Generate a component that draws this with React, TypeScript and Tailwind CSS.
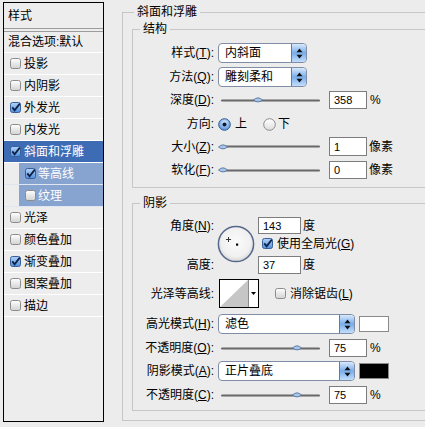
import React from "react";

const FONT = "font-['Liberation_Sans','Noto_Sans_CJK_SC',sans-serif]";

function CheckBox({ checked }: { checked?: boolean }) {
  return (
    <svg width="11" height="11" viewBox="0 0 11 11" className="shrink-0 block">
      <defs>
        <linearGradient id="cbOn" x1="0" y1="0" x2="0" y2="1">
          <stop offset="0" stopColor="#b4d4f7" />
          <stop offset="1" stopColor="#4f8fde" />
        </linearGradient>
        <linearGradient id="cbOff" x1="0" y1="0" x2="0" y2="1">
          <stop offset="0" stopColor="#ffffff" />
          <stop offset="1" stopColor="#d2d2d2" />
        </linearGradient>
      </defs>
      <rect
        x="0.5"
        y="0.5"
        width="10"
        height="10"
        rx="2"
        fill={checked ? "url(#cbOn)" : "url(#cbOff)"}
        stroke={checked ? "#37609a" : "#8c8c8c"}
      />
      {checked && (
        <path d="M2.3 5.4 L4.6 8.2 L9.8 1.6" fill="none" stroke="#0d1f45" strokeWidth="1.8" />
      )}
    </svg>
  );
}

function Radio({ checked }: { checked?: boolean }) {
  return (
    <svg width="13" height="13" viewBox="0 0 13 13" className="shrink-0 block">
      <defs>
        <radialGradient id="rOn" cx="0.5" cy="0.35" r="0.6">
          <stop offset="0" stopColor="#d9ebfd" />
          <stop offset="1" stopColor="#5b95dc" />
        </radialGradient>
        <linearGradient id="rOff" x1="0" y1="0" x2="0" y2="1">
          <stop offset="0" stopColor="#ffffff" />
          <stop offset="1" stopColor="#dedede" />
        </linearGradient>
      </defs>
      <circle
        cx="6.5"
        cy="6.5"
        r="5.8"
        fill={checked ? "url(#rOn)" : "url(#rOff)"}
        stroke={checked ? "#2f5a95" : "#8a8a8a"}
      />
      {checked && <circle cx="6.5" cy="6.5" r="2" fill="#0e1a33" />}
    </svg>
  );
}

function Stepper() {
  return (
    <div className="w-[15px] h-full rounded-r-[3px] border-l border-[#4f7fbf] bg-linear-to-b from-[#d9e9fb] via-[#79acea] to-[#c2defb] flex items-center justify-center">
      <svg width="7" height="11" viewBox="0 0 7 11">
        <path d="M3.5 0.5 L6.5 4.3 L0.5 4.3 Z M0.5 6.7 L6.5 6.7 L3.5 10.5 Z" fill="#111" />
      </svg>
    </div>
  );
}

function Select({ text, w }: { text: string; w: string }) {
  return (
    <div className={`${w} h-[20px] rounded-[4px] border border-[#7f8ea6] bg-white flex items-stretch overflow-hidden`}>
      <div className="flex-1 pl-[6px] flex items-center whitespace-nowrap">{text}</div>
      <Stepper />
    </div>
  );
}

function Slider({ pos }: { pos: number }) {
  return (
    <div className="relative w-[107px] h-full flex items-center">
      <div className="ml-[3px] w-[99px] h-[3px] rounded-full bg-linear-to-b from-[#c8c8c8] via-[#6a6a6a] to-[#c8c8c8]" />
      <svg
        className="absolute top-1/2 -translate-y-1/2"
        style={{ left: pos - 5 }}
        width="10"
        height="7"
        viewBox="0 0 10 7"
      >
        <path d="M0.5 3.5 Q5 -0.8 9.5 3.5 Q5 7.3 0.5 3.5Z" fill="#a9c5e8" stroke="#55769f" strokeWidth="0.9" />
      </svg>
    </div>
  );
}

function Num({ v, cls }: { v: string; cls: string }) {
  return (
    <div className={`${cls} shrink-0 border border-[#7d7d7d] bg-white flex items-center pl-[4px] text-[11px]`}>
      {v}
    </div>
  );
}

function Lab({ children }: { children: React.ReactNode }) {
  return <div className="w-[81px] shrink-0 text-right whitespace-nowrap">{children}</div>;
}

function AngleDial() {
  return (
    <svg width="38" height="38" viewBox="0 0 38 38" className="block">
      <defs>
        <radialGradient id="dial" cx="0.5" cy="0.45" r="0.55">
          <stop offset="0" stopColor="#fbfbfb" />
          <stop offset="0.75" stopColor="#f0f0f0" />
          <stop offset="1" stopColor="#d4d4d4" />
        </radialGradient>
      </defs>
      <circle cx="19" cy="19" r="17.6" fill="url(#dial)" stroke="#56678c" strokeWidth="1.5" />
      <path d="M9 14.5 H14 M11.5 12 V17" stroke="#333" strokeWidth="1" />
      <rect x="19" y="18.5" width="2.2" height="2.2" fill="#000" />
    </svg>
  );
}

type Item = { t: string; c?: boolean; sel?: boolean; sub?: boolean };

const items: Item[] = [
  { t: "投影" },
  { t: "内阴影" },
  { t: "外发光", c: true },
  { t: "内发光" },
  { t: "斜面和浮雕", c: true, sel: true },
  { t: "等高线", c: true, sub: true },
  { t: "纹理", sub: true },
  { t: "光泽" },
  { t: "颜色叠加" },
  { t: "渐变叠加", c: true },
  { t: "图案叠加" },
  { t: "描边" },
];

function LeftRow({ it }: { it: Item }) {
  if (it.sub) {
    return (
      <div className="h-[22px] border-b border-[#dfe6f1] flex">
        <div className="ml-[15px] flex-1 bg-[#87a3cf] text-white flex items-center pl-[6px] gap-[2px]">
          <CheckBox checked={it.c} />
          <span>{it.t}</span>
        </div>
      </div>
    );
  }
  return (
    <div
      className={`h-[22px] border-b border-white flex items-center pl-[6px] gap-[3px] ${
        it.sel ? "bg-[#3d6cb5] text-white" : ""
      }`}
    >
      <CheckBox checked={it.c} />
      <span>{it.t}</span>
    </div>
  );
}

export default function App() {
  return (
    <div className={`${FONT} w-[425px] h-[427px] overflow-hidden bg-[#ececec] flex items-start text-[12px] leading-[14px] text-black`}>
      {/* left list */}
      <div className="ml-[3px] mt-[2px] w-[101px] h-[420px] shrink-0 border border-black bg-[#ededed] flex flex-col">
        <div className="h-[25px] flex items-center pl-[4px]">样式</div>
        <div className="h-[4px] border-y border-[#9c9c9c]" />
        <div className="h-[21px] border-b border-white flex items-center pl-[4px] whitespace-nowrap">
          混合选项:默认
        </div>
        {items.map((it) => (
          <LeftRow key={it.t} it={it} />
        ))}
      </div>

      {/* right panel */}
      <fieldset className="ml-[18px] mt-[5px] w-[310px] h-[416px] shrink-0 border border-[#c6c6c6]">
        <legend className="ml-[11px] px-[3px] h-[14px] leading-[14px]">斜面和浮雕</legend>
        <div className="pl-[9px] flex flex-col">
          {/* 结构 */}
          <fieldset className="mt-[3px] w-[300px] h-[166px] border border-[#c6c6c6]">
            <legend className="ml-[7px] px-[3px] h-[14px] leading-[14px]">结构</legend>
            <div className="flex flex-col">
              <div className="flex items-center mt-[7px] h-[20px]">
                <Lab>
                  样式(<u>T</u>):
                </Lab>
                <div className="ml-[4px]">
                  <Select text="内斜面" w="w-[89px]" />
                </div>
              </div>
              <div className="flex items-center mt-[4px] h-[20px]">
                <Lab>
                  方法(<u>Q</u>):
                </Lab>
                <div className="ml-[4px]">
                  <Select text="雕刻柔和" w="w-[89px]" />
                </div>
              </div>
              <div className="flex items-center mt-[4px] h-[18px]">
                <Lab>
                  深度(<u>D</u>):
                </Lab>
                <div className="ml-[4px] h-full">
                  <Slider pos={40} />
                </div>
                <Num v="358" cls="ml-[4px] w-[38px] h-[18px]" />
                <span className="ml-[3px]">%</span>
              </div>
              <div className="flex items-center mt-[6px] h-[18px]">
                <Lab>方向:</Lab>
                <div className="ml-[4px] flex items-center">
                  <Radio checked />
                  <span className="ml-[4px]">上</span>
                  <div className="ml-[16px]">
                    <Radio />
                  </div>
                  <span className="ml-[2px]">下</span>
                </div>
              </div>
              <div className="flex items-center mt-[4px] h-[19px]">
                <Lab>
                  大小(<u>Z</u>):
                </Lab>
                <div className="ml-[4px] h-full">
                  <Slider pos={5} />
                </div>
                <Num v="1" cls="ml-[4px] w-[38px] h-[19px]" />
                <span className="ml-[2px]">像素</span>
              </div>
              <div className="flex items-center mt-[5px] h-[18px]">
                <Lab>
                  软化(<u>F</u>):
                </Lab>
                <div className="ml-[4px] h-full">
                  <Slider pos={5} />
                </div>
                <Num v="0" cls="ml-[4px] w-[38px] h-[18px]" />
                <span className="ml-[2px]">像素</span>
              </div>
            </div>
          </fieldset>

          {/* 阴影 */}
          <fieldset className="mt-[8px] w-[300px] h-[215px] border border-[#c6c6c6]">
            <legend className="ml-[7px] px-[3px] h-[14px] leading-[14px]">阴影</legend>
            <div className="flex flex-col">
              <div className="flex mt-[7px] h-[57px]">
                <div className="w-[81px] shrink-0 flex flex-col justify-between">
                  <div className="h-[18px] flex items-center justify-end whitespace-nowrap">
                    角度(<u>N</u>):
                  </div>
                  <div className="h-[18px] flex items-center justify-end whitespace-nowrap">高度:</div>
                </div>
                <div className="ml-[3px] mt-[8px]">
                  <AngleDial />
                </div>
                <div className="ml-[3px] flex flex-col">
                  <div className="flex items-center h-[17px]">
                    <Num v="143" cls="w-[43px] h-[17px]" />
                    <span className="ml-[2px]">度</span>
                  </div>
                  <div className="flex items-center mt-[4px] h-[11px] ml-[4px]">
                    <CheckBox checked />
                    <span className="ml-[4px] whitespace-nowrap">
                      使用全局光(<u>G</u>)
                    </span>
                  </div>
                  <div className="flex items-center mt-[7px] h-[18px]">
                    <Num v="37" cls="w-[43px] h-[18px]" />
                    <span className="ml-[2px]">度</span>
                  </div>
                </div>
              </div>

              <div className="flex items-center mt-[5px] h-[29px]">
                <Lab>光泽等高线:</Lab>
                <div className="ml-[5px] w-[40px] h-[29px] border border-black bg-white flex">
                  <svg width="28" height="27" viewBox="0 0 28 27" className="block">
                    <polygon points="0,27 28,0 28,27" fill="#c6c6c6" />
                  </svg>
                  <div className="w-px bg-[#8a8a8a]" />
                  <div className="flex-1 flex items-center justify-center">
                    <svg width="5" height="3" viewBox="0 0 5 3">
                      <path d="M0 0 H5 L2.5 3 Z" fill="#000" />
                    </svg>
                  </div>
                </div>
                <div className="ml-[16px]">
                  <CheckBox />
                </div>
                <span className="ml-[4px] whitespace-nowrap">
                  消除锯齿(<u>L</u>)
                </span>
              </div>

              <div className="flex items-center mt-[6px] h-[20px]">
                <Lab>
                  高光模式(<u>H</u>):
                </Lab>
                <div className="ml-[4px]">
                  <Select text="滤色" w="w-[137px]" />
                </div>
                <div className="ml-[4px] w-[30px] h-[16px] border border-[#8a8a8a] bg-white" />
              </div>

              <div className="flex items-center mt-[5px] h-[18px]">
                <Lab>
                  不透明度(<u>O</u>):
                </Lab>
                <div className="ml-[4px] h-full">
                  <Slider pos={79} />
                </div>
                <Num v="75" cls="ml-[4px] w-[38px] h-[18px]" />
                <span className="ml-[3px]">%</span>
              </div>

              <div className="flex items-center mt-[4px] h-[20px]">
                <Lab>
                  阴影模式(<u>A</u>):
                </Lab>
                <div className="ml-[4px]">
                  <Select text="正片叠底" w="w-[137px]" />
                </div>
                <div className="ml-[4px] w-[30px] h-[16px] border border-[#8a8a8a] bg-black" />
              </div>

              <div className="flex items-center mt-[5px] h-[18px]">
                <Lab>
                  不透明度(<u>C</u>):
                </Lab>
                <div className="ml-[4px] h-full">
                  <Slider pos={79} />
                </div>
                <Num v="75" cls="ml-[4px] w-[38px] h-[18px]" />
                <span className="ml-[3px]">%</span>
              </div>
            </div>
          </fieldset>
        </div>
      </fieldset>
    </div>
  );
}
